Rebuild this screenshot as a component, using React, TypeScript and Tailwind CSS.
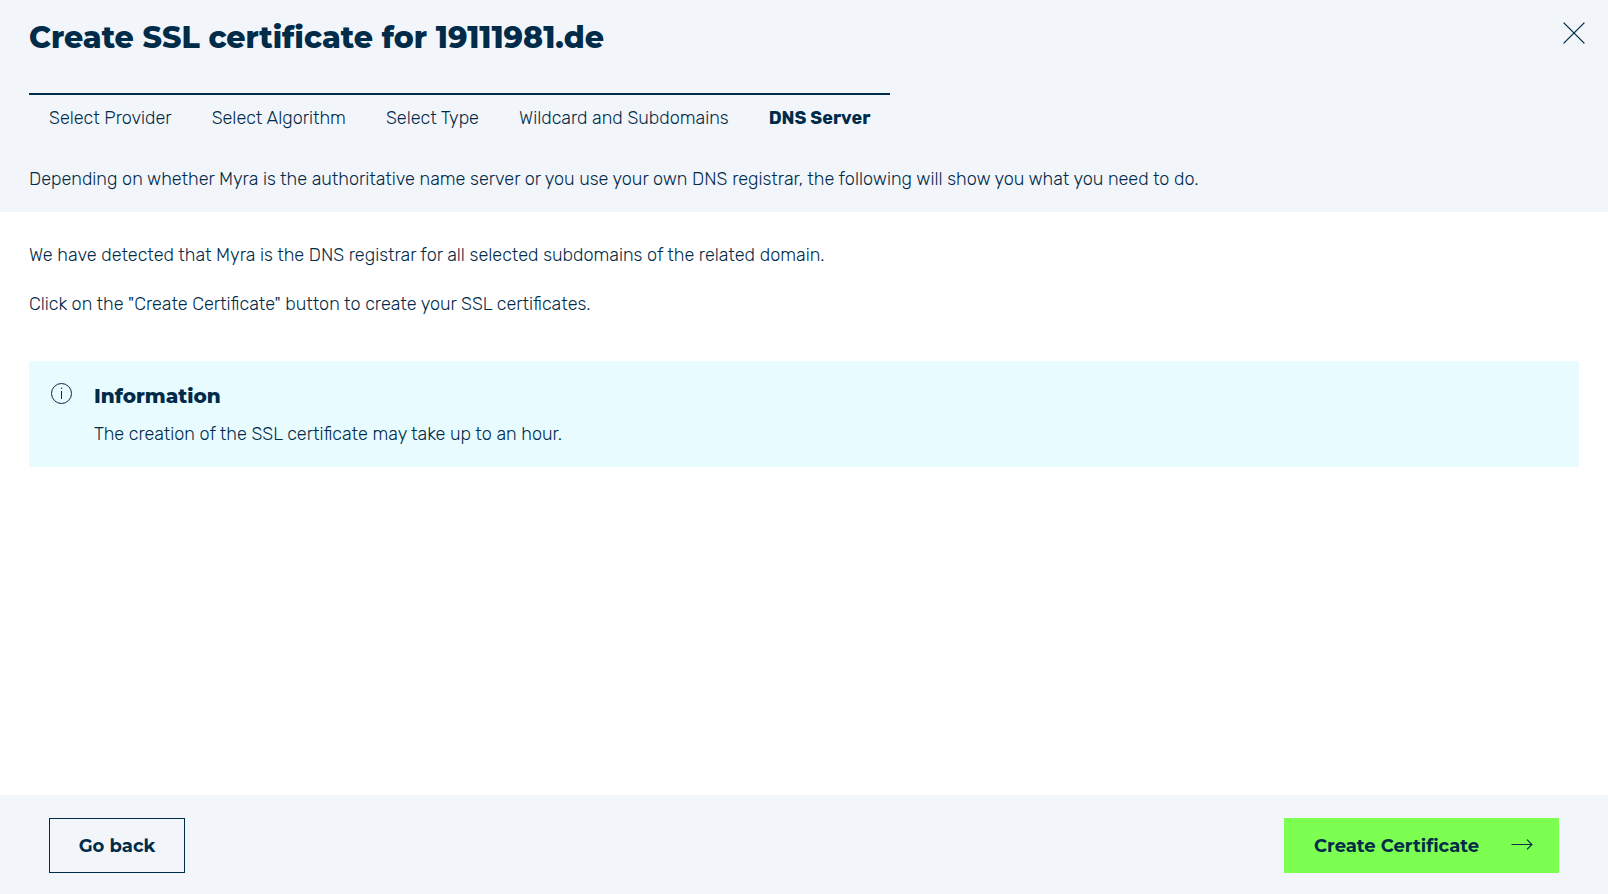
const steps = ["Select Provider", "Select Algorithm", "Select Type", "Wildcard and Subdomains", "DNS Server"];

const currentStep = "DNS Server";

function CloseIcon() {
  return (
    <svg width="22" height="22" viewBox="0 0 22 22" fill="none" stroke="currentColor" strokeWidth="1.3" aria-hidden="true">
      <path d="M.6 .6 21.4 21.4M21.4 .6 .6 21.4" />
    </svg>
  );
}

function InfoIcon() {
  return (
    <svg className="shrink-0" width="22" height="22" viewBox="0 0 22 22" fill="none" stroke="currentColor" aria-hidden="true">
      <circle cx="10.5" cy="11.5" r="10" />
      <path d="M10.5 9v8" />
      <circle cx="10.5" cy="6.3" r=".7" fill="currentColor" stroke="none" />
    </svg>
  );
}

function ArrowIcon() {
  return (
    <svg width="22" height="14" viewBox="0 0 22 14" fill="none" stroke="currentColor" strokeWidth="1.1" aria-hidden="true">
      <path d="M.5 5.5H21M16 .6 21 5.5l-5 4.9" />
    </svg>
  );
}

export default function App() {
  return (
    <div className="flex min-h-screen flex-col bg-white font-['Rubik','Roboto',sans-serif] text-lg font-light leading-7 text-[#002b49]">
      <header className="bg-[#f2f5fa] px-[29px] pb-[19px] pt-[17px]">
        <div className="flex items-start justify-between">
          <h1 className="font-['Montserrat','Inter',sans-serif] text-3xl font-extrabold leading-[42px]">
            Create SSL certificate for 19111981.de
          </h1>
          <button type="button" aria-label="Close" className="-mr-1.5 mt-[5px] cursor-pointer">
            <CloseIcon />
          </button>
        </div>
        <nav aria-label="Steps" className="mt-[34px]">
          <ol className="flex w-fit border-t-2 border-[#002b49] pt-[9px]">
            {steps.map((step) => (
              <li key={step}>
                <a
                  href="#"
                  aria-current={step === currentStep ? "step" : undefined}
                  className={
                    step === currentStep
                      ? "block whitespace-nowrap px-5 font-bold"
                      : "block whitespace-nowrap px-5"
                  }
                >
                  {step}
                </a>
              </li>
            ))}
          </ol>
        </nav>
        <p className="mt-[33px]">
          Depending on whether Myra is the authoritative name server or you use your own DNS registrar, the following
          will show you what you need to do.
        </p>
      </header>

      <main className="grow px-[29px] pt-[29px]">
        <p>We have detected that Myra is the DNS registrar for all selected subdomains of the related domain.</p>
        <p className="mt-[21px]">Click on the "Create Certificate" button to create your SSL certificates.</p>
        <section className="mt-[43px] flex gap-[21px] bg-[#e8fbff] px-[22px] pb-[19px] pt-[21px]">
          <InfoIcon />
          <div>
            <h2 className="font-['Montserrat','Inter',sans-serif] text-xl font-extrabold leading-7">Information</h2>
            <p className="mt-2.5">The creation of the SSL certificate may take up to an hour.</p>
          </div>
        </section>
      </main>

      <footer className="flex items-center justify-between bg-[#f2f5fa] px-[49px] pb-[21px] pt-[23px] font-['Montserrat','Inter',sans-serif] font-bold">
        <button type="button" className="h-[55px] min-w-[136px] cursor-pointer border border-[#002b49] px-7">
          Go back
        </button>
        <button
          type="button"
          className="flex h-[55px] min-w-[275px] cursor-pointer items-center justify-between bg-[#7dff52] pl-[30px] pr-[26px]"
        >
          Create Certificate
          <ArrowIcon />
        </button>
      </footer>
    </div>
  );
}
